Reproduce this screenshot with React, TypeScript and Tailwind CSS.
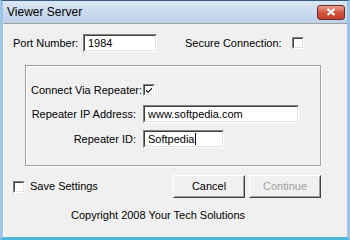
import React from 'react';

const font = { fontFamily: '"Liberation Sans", Arial, sans-serif' };

function Sunken({ className = '', children }: { className?: string; children?: React.ReactNode }) {
  return (
    <div className={`border border-t-[#828282] border-l-[#828282] border-b-[#ffffff] border-r-[#ffffff] ${className}`}>
      <div className="h-full w-full border border-t-[#404040] border-l-[#404040] border-b-[#e3e3e3] border-r-[#e3e3e3] bg-white">
        {children}
      </div>
    </div>
  );
}

function TextBox({ value, width, caret }: { value: string; width: string; caret?: boolean }) {
  return (
    <Sunken className={`h-[18px] shrink-0 ${width}`}>
      <div className="flex h-full items-center pl-[3px] text-[11px] leading-none text-black">
        {value}
        {caret && <span className="ml-[1px] inline-block h-[12px] w-px bg-black" />}
      </div>
    </Sunken>
  );
}

function Check({ checked }: { checked?: boolean }) {
  return (
    <Sunken className="h-[12px] w-[12px] shrink-0">
      {checked && (
        <svg viewBox="0 0 8 8" className="h-[8px] w-[8px]">
          <path d="M1 3.5 L3 5.5 L7 1.5 L7 3 L3 7 L1 5 Z" fill="#000" />
        </svg>
      )}
    </Sunken>
  );
}

function Button({ label, disabled }: { label: string; disabled?: boolean }) {
  return (
    <div className="h-[23px] w-[72px] shrink-0 border border-t-[#ffffff] border-l-[#ffffff] border-b-[#404040] border-r-[#404040]">
      <div className={`flex h-full w-full items-center justify-center border border-t-[#f0f0f0] border-l-[#f0f0f0] border-b-[#a0a0a0] border-r-[#a0a0a0] bg-[#f0f0f0] text-[11px] ${disabled ? 'text-[#a0a0a0]' : 'text-black'}`}>
        {label}
      </div>
    </div>
  );
}

export default function App() {
  return (
    <div className="h-[240px] w-[350px] overflow-hidden bg-[#1f4e79]" style={font}>
      <div className="flex h-full w-full flex-col border-x-[3px] border-b-[3px] border-t border-x-[#9fc3e6] border-b-[#4fb8d8] border-t-[#3a5a7c]">
        {/* title bar */}
        <div className="flex h-[22px] shrink-0 items-center justify-between bg-gradient-to-b from-[#dae6f3] to-[#bcd1ea] pl-[4px] pr-[2px]">
          <span className="text-[12px] text-black">Viewer Server</span>
          <div className="flex h-[15px] w-[28px] items-center justify-center rounded-[3px] border border-[#6b2a2a] bg-gradient-to-b from-[#e8a08f] via-[#d2553d] to-[#c0402a]">
            <svg viewBox="0 0 10 8" className="h-[8px] w-[10px]">
              <path d="M1.5 1 L8.5 7 M8.5 1 L1.5 7" stroke="#fff" strokeWidth="2" />
            </svg>
          </div>
        </div>

        {/* client area */}
        <div className="flex flex-1 flex-col whitespace-nowrap border-l border-t border-l-white border-t-[#a0a0a0] bg-[#f0f0f0] text-[11px] leading-[13px] text-black">
          <div className="mt-[10px] flex h-[18px] items-center">
            <span className="ml-[9px] w-[70px] shrink-0">Port Number:</span>
            <TextBox value="1984" width="w-[74px]" />
            <span className="ml-[28px] w-[107px] shrink-0">Secure Connection:</span>
            <Check />
          </div>

          <div className="ml-[21px] mt-[13px] h-[101px] w-[296px] border border-[#a0a0a0] shadow-[1px_1px_0_#fff,inset_1px_1px_0_#fff]">
            <div className="mt-[18px] flex h-[12px] items-center">
              <span className="ml-[5px] w-[112px] shrink-0">Connect Via Repeater:</span>
              <Check checked />
            </div>
            <div className="mt-[9px] flex h-[18px] items-center">
              <span className="w-[117px] shrink-0 pr-[7px] text-right">Repeater IP Address:</span>
              <TextBox value="www.softpedia.com" width="w-[156px]" />
            </div>
            <div className="mt-[7px] flex h-[18px] items-center">
              <span className="w-[117px] shrink-0 pr-[7px] text-right">Repeater ID:</span>
              <TextBox value="Softpedia" width="w-[81px]" caret />
            </div>
          </div>

          <div className="mt-[9px] flex h-[23px] items-center">
            <div className="ml-[9px]">
              <Check />
            </div>
            <span className="ml-[5px] w-[143px] shrink-0">Save Settings</span>
            <Button label="Cancel" />
            <div className="ml-[4px]">
              <Button label="Continue" disabled />
            </div>
          </div>

          <div className="ml-[67px] mt-[11px]">Copyright 2008 Your Tech Solutions</div>
        </div>
      </div>
    </div>
  );
}
